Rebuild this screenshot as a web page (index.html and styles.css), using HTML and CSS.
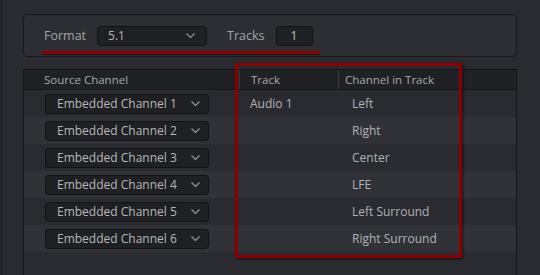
FILE: index.html
```html
<!DOCTYPE html>
<html lang="en">
<head>
    <meta charset="UTF-8">
    <meta name="viewport" content="width=device-width, initial-scale=1.0">
    <title>Audio Mapping</title>
    <link rel="stylesheet" href="styles.css">
</head>
<body>

    <div class="window">
        <!-- Format and track count -->
        <div class="format-bar">
            <span class="label">Format</span>
            <div class="select select-format">
                <span>5.1</span>
                <svg class="chevron" width="9" height="5" viewBox="0 0 9 5"><path d="M0.5 0.5 L4.5 4.5 L8.5 0.5" fill="none" stroke="#9a9a9e" stroke-width="1.1"/></svg>
            </div>
            <span class="label label-tracks">Tracks</span>
            <div class="number-box">1</div>
            <div class="mark-underline"></div>
        </div>

        <!-- Channel mapping table -->
        <div class="mapping">
            <div class="row head">
                <div class="cell col-source">Source Channel</div>
                <div class="cell col-track">Track</div>
                <div class="cell col-channel">Channel in Track</div>
            </div>
            <div id="rows"></div>
            <div class="mark-box"></div>
        </div>
    </div>

    <script>
        const channels = ["Left", "Right", "Center", "LFE", "Left Surround", "Right Surround"];

        document.getElementById("rows").innerHTML = channels.map((name, i) => `
            <div class="row ${i % 2 ? 'alt' : ''}">
                <div class="cell col-source">
                    <div class="select select-source">
                        <span>Embedded Channel ${i + 1}</span>
                        <svg class="chevron" width="9" height="5" viewBox="0 0 9 5"><path d="M0.5 0.5 L4.5 4.5 L8.5 0.5" fill="none" stroke="#9a9a9e" stroke-width="1.1"/></svg>
                    </div>
                </div>
                <div class="cell col-track">${i === 0 ? 'Audio 1' : ''}</div>
                <div class="cell col-channel">${name}</div>
            </div>
        `).join('');
    </script>

</body>
</html>
```

FILE: styles.css
```css
body {
    margin: 0;
    background-color: #2a2b30;
    font-family: "Open Sans", "Noto Sans", sans-serif;
    font-size: 12px;
    color: #b2b2b6;
    overflow: hidden;
}

.window {
    height: 275px;
    border-left: 3px solid #222327;
    padding: 14px 23px 0 20px;
    box-sizing: border-box;
}

/* Верхняя панель с форматом */
.format-bar {
    position: relative;
    display: flex;
    align-items: center;
    height: 41px;
    padding-left: 20px;
    background-color: #2d2e33;
    border: 1px solid #18181b;
    border-radius: 4px;
}

.label {
    color: #a2a2a6;
    font-size: 12.5px;
}

.label-tracks {
    margin-left: 20px;
}

.select {
    display: flex;
    align-items: center;
    justify-content: space-between;
    box-sizing: border-box;
    background-color: #1f2023;
    border: 1px solid #131315;
    border-radius: 3px;
    color: #b8b8bc;
}

.select-format {
    width: 110px;
    height: 20px;
    margin-left: 11px;
    padding: 0 11px 0 10px;
}

.select-source {
    width: 164px;
    height: 20px;
    padding: 0 8px 0 11px;
}

.chevron {
    display: block;
}

.number-box {
    width: 37px;
    height: 20px;
    margin-left: 11px;
    box-sizing: border-box;
    background-color: #1f2023;
    border: 1px solid #131315;
    border-radius: 3px;
    text-align: center;
    line-height: 18px;
    color: #c0c0c4;
}

/* Таблица каналов */
.mapping {
    position: relative;
    margin-top: 12px;
    height: 240px;
    border: 1px solid #141416;
    border-bottom: none;
}

.row {
    display: grid;
    grid-template-columns: 215px 99px 1fr;
    height: 27px;
    align-items: center;
}

.row.alt {
    background-color: #313237;
}

.row.head {
    height: 19px;
    background-color: #202124;
    border-bottom: 1px solid #161618;
    color: #a8a8ac;
    font-size: 11.5px;
}

.head .cell {
    height: 100%;
    display: flex;
    align-items: center;
}

.head .col-track,
.head .col-channel {
    border-left: 1px solid #3a3b40;
}

.col-source {
    padding-left: 20px;
}

.row:not(.head) .col-source {
    padding-left: 21px;
}

.col-track {
    padding-left: 11px;
}

.head .col-channel {
    padding-left: 6px;
}

.col-channel {
    padding-left: 14px;
}

/* Красные пометки поверх */
.mark-underline {
    position: absolute;
    left: 18px;
    top: 36px;
    width: 278px;
    height: 2.5px;
    background-color: #8e0000;
    border-radius: 1px;
    box-shadow: 0 1px 1px rgba(0, 0, 0, 0.5);
}

.mark-box {
    position: absolute;
    left: 211px;
    top: -7px;
    width: 221px;
    height: 189px;
    border: 3px solid #8e0000;
    box-shadow: 1px 1px 2px rgba(0, 0, 0, 0.6);
}
```
